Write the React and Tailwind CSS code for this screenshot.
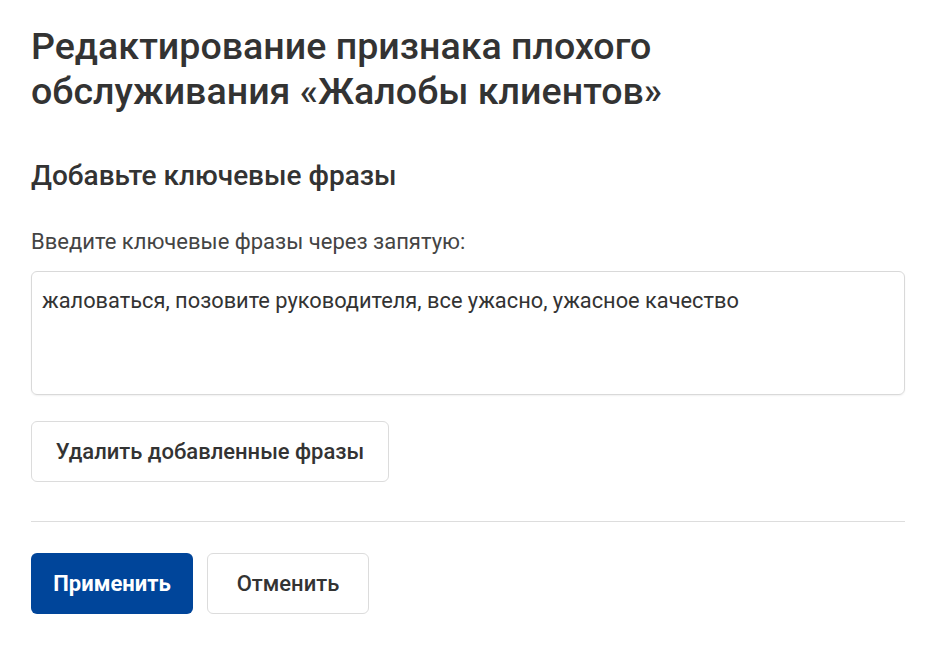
import React, { useState } from "react";

const App = () => {
  const [phrases, setPhrases] = useState(
    "жаловаться, позовите руководителя, все ужасно, ужасное качество"
  );

  return (
    <div className="min-h-screen bg-white font-['Roboto',sans-serif] text-[#333333]">
      <div className="w-[874px] ml-[31px] pt-[24px]">
        <h1 className="max-w-[700px] text-[37.6px] leading-[45px] font-medium">
          Редактирование признака плохого обслуживания «Жалобы клиентов»
        </h1>

        <h2 className="mt-[44px] text-[28px] leading-[36px] font-medium">
          Добавьте ключевые фразы
        </h2>

        <label className="block mt-[34px] text-[22px] leading-[28px] text-[#444444]">
          Введите ключевые фразы через запятую:
        </label>

        <textarea
          className="block mt-[15px] w-full h-[124px] resize-none rounded-[6px] border border-[#d9d9d9] px-[10px] py-[15px] text-[21.8px] leading-[28px] text-[#333333] outline-none shadow-[0_1px_2px_rgba(0,0,0,0.06)]"
          value={phrases}
          onChange={(e) => setPhrases(e.target.value)}
        />

        <button
          className="mt-[26px] h-[61px] w-[358px] rounded-[6px] border border-[#dcdcdc] bg-white text-[22px] font-medium text-[#333333]"
          onClick={() => setPhrases("")}
        >
          Удалить добавленные фразы
        </button>

        <div className="mt-[39px] border-t border-[#dddddd]" />

        <div className="mt-[31px] flex gap-[14px]">
          <button className="h-[61px] w-[162px] rounded-[6px] bg-[#00459a] text-white text-[22px] font-bold">
            Применить
          </button>
          <button className="h-[61px] w-[162px] rounded-[6px] border border-[#dcdcdc] bg-white text-[22px] font-medium text-[#333333]">
            Отменить
          </button>
        </div>
      </div>
    </div>
  );
};

export default App;
